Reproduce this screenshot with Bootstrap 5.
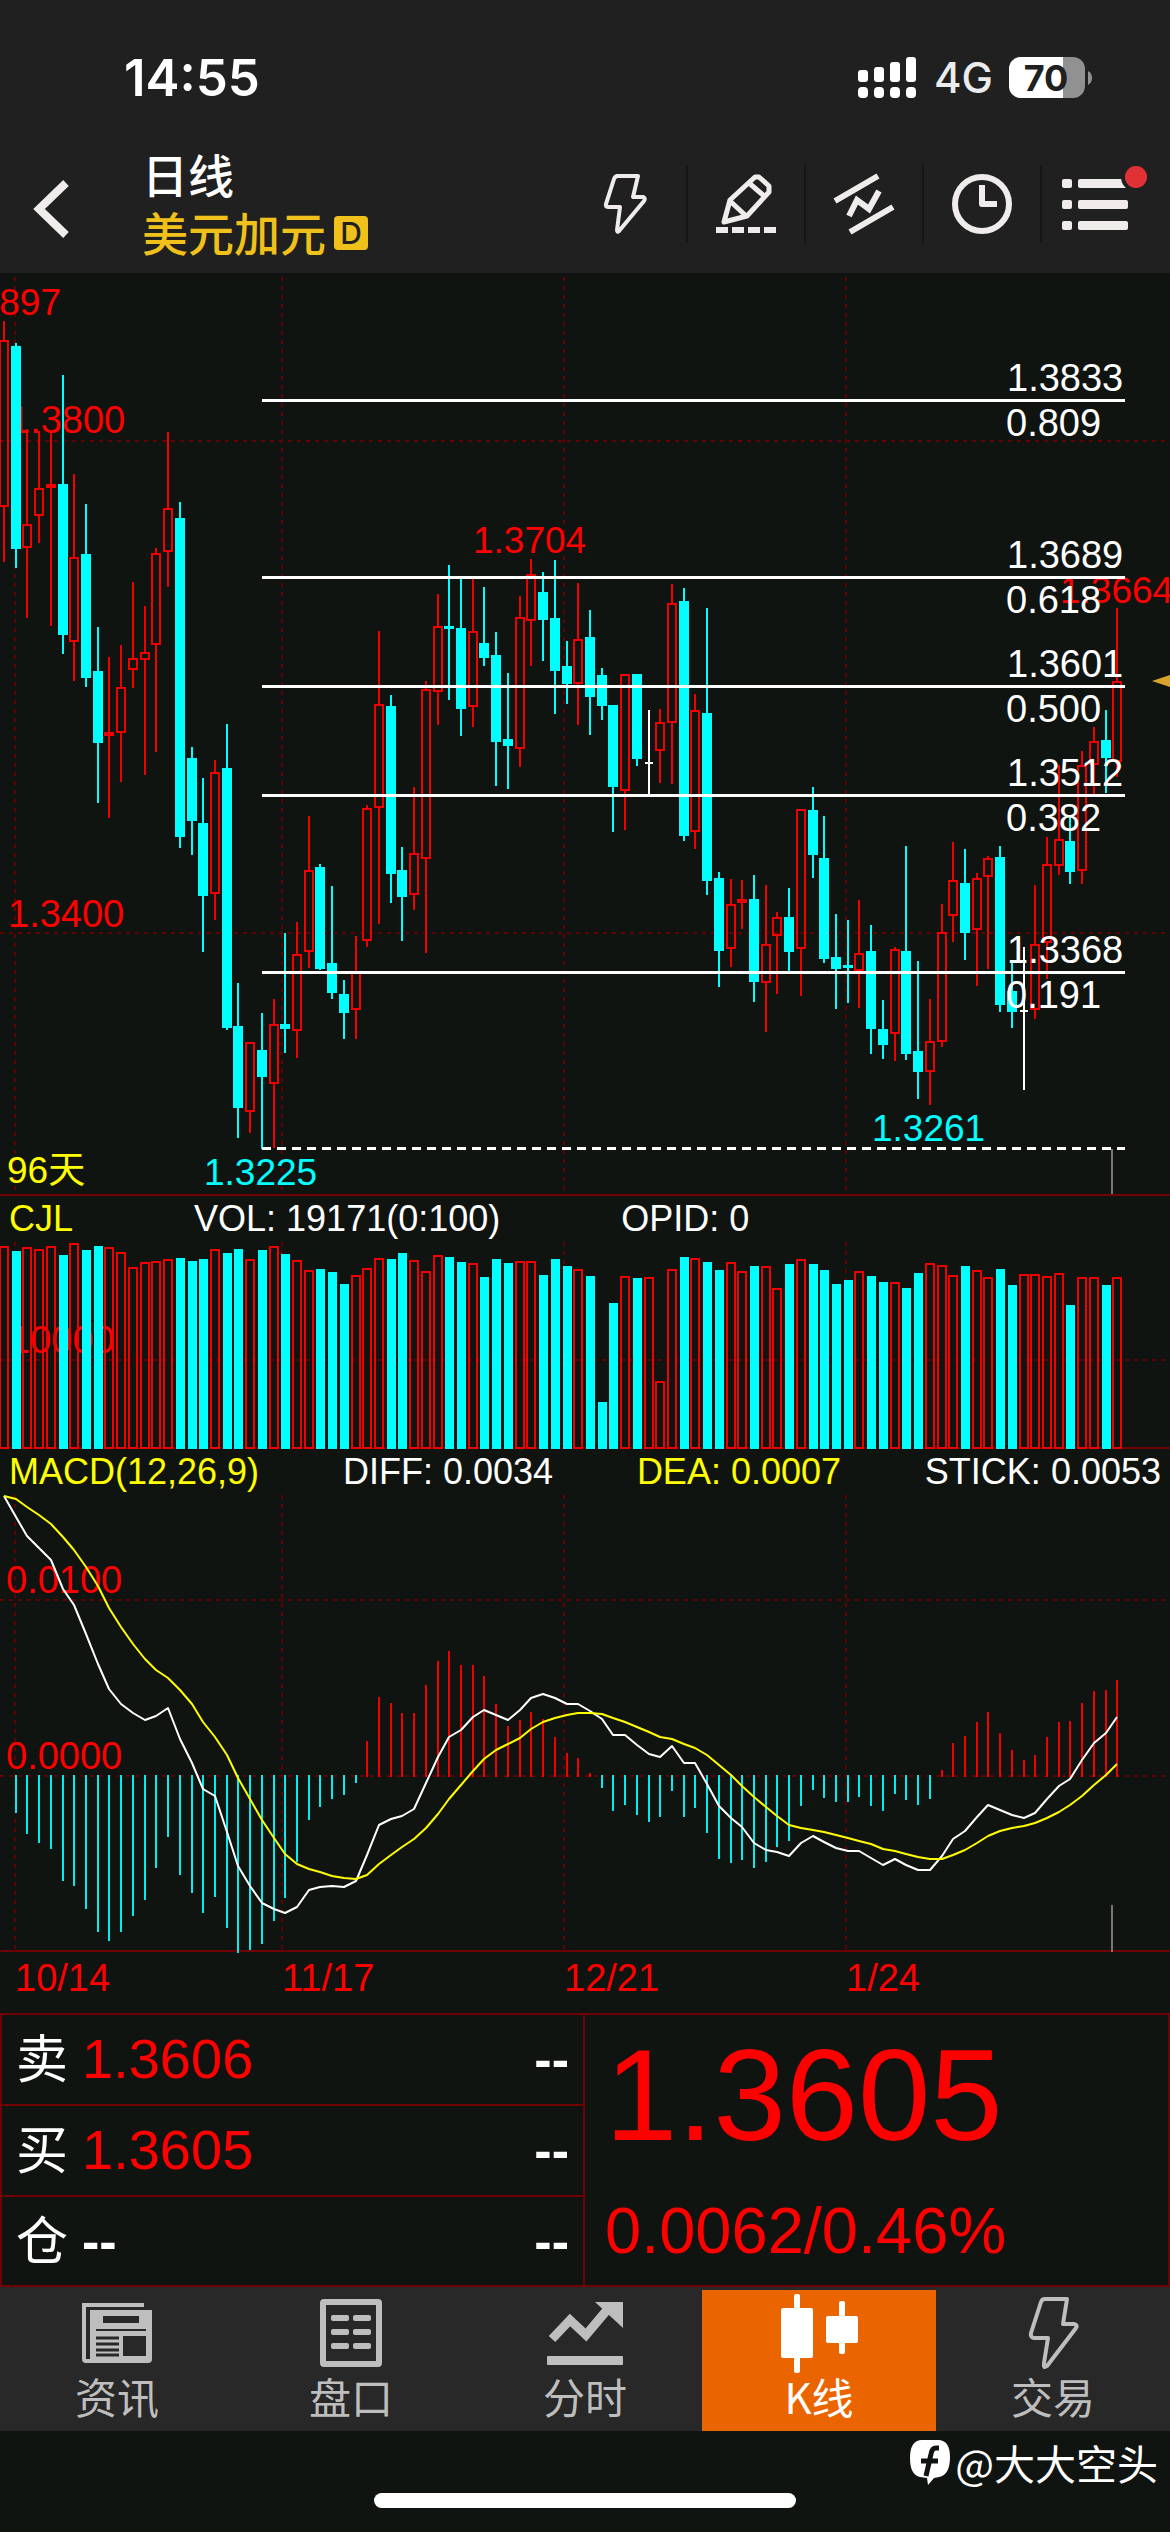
<!DOCTYPE html>
<html lang="zh-CN">
<head>
<meta charset="utf-8">
<meta name="viewport" content="width=device-width, initial-scale=1">
<title>美元加元 日线</title>
<link href="https://cdn.jsdelivr.net/npm/bootstrap@5.3.0/dist/css/bootstrap.min.css" rel="stylesheet">
<style>
  :root { --ink: #101411; --bar: #202020; --line: #6e0006; --up: #f00; --down: #0ff; --gold: #efc11a; }
  body { background: var(--ink); color: #fff; font-family: "Liberation Sans", "Noto Sans CJK SC", sans-serif; overflow-x: hidden; }
  svg { display: block; }
  .topbar { background: var(--bar); }
  .status-row { height: 116px; padding: 40px 77px 0 124px; font-family: Inter, sans-serif; }
  .clock-text { font-size: 51px; line-height: 76px; font-weight: 600; }
  .net-text { font-size: 42px; line-height: 76px; font-weight: 500; color: #ececec; }
  .title-row { height: 157px; }
  .title-main, .title-sub { font-family: "Noto Sans CJK SC", sans-serif; font-weight: 500; font-size: 46px; line-height: 58px; }
  .title-box { padding-top: 28px; }
  .title-sub { color: var(--gold); }
  .day-badge { width: 34px; height: 34px; margin-top: 4px; border-radius: 4px; background: var(--gold); color: #202020; font: 500 30px/34px Inter, sans-serif; text-align: center; }
  .btn.bare { padding: 0; border: 0; color: #efeceb; }
  .btn.back-btn { width: 142px; padding: 28px 0 0 32px; }
  .tools { padding-top: 18px; }
  .btn.tool-btn { width: 118px; height: 78px; border-radius: 0; border-right: 2px solid #161616; }
  .btn.tool-btn:last-child { border-right: 0; width: 128px; }
  .tool-btn svg { overflow: visible; }
  .panel-line { border-bottom: 2px solid var(--line); }
  .indicator-row { font-size: 36px; line-height: 46px; padding: 0 9px 0 9px; white-space: nowrap; }
  .indicator-vol { gap: 121px; }
  .c-yellow { color: #ff0; }
  .chart { width: 100%; height: auto; }
  .chart text { font-family: "Liberation Sans", "Noto Sans CJK SC", sans-serif; font-size: 37px; }
  .chart .axis { font-size: 38px; fill: var(--up); }
  .chart .fib { font-size: 38px; fill: #fff; }
  .quotes { border: 2px solid var(--line); }
  .quote-left { border-right: 2px solid var(--line); }
  .quote-row { height: 91px; padding: 0 14px 0 14px; border-bottom: 2px solid var(--line); }
  .quote-row:last-child { border-bottom: 0; height: 88px; }
  .side { font: 400 52px/82px "Noto Sans CJK SC", sans-serif; width: 66px; }
  .quote-val { font-size: 56px; line-height: 88px; color: var(--up); }
  .dashes { font-size: 52px; line-height: 88px; font-weight: 700; }
  .price-cell { padding: 8px 20px 0 20px; color: var(--up); }
  .price-big { font-size: 130px; line-height: 144px; }
  .price-chg { font-size: 65px; line-height: 104px; padding-top: 12px; }
  .tabs { background: #282828; height: 144px; }
  .tab-link { color: #bebebe; text-decoration: none; margin-top: 3px; padding-top: 3px; font: 400 42px/46px "Noto Sans CJK SC", sans-serif; }
  .tab-link.active { background: #ea6500; color: #fff; }
  .foot { height: 101px; padding-top: 6px; }
  .credit { font: 400 41px/50px "Noto Sans CJK SC", sans-serif; gap: 5px; padding-right: 12px; }
  .home-bar { width: 36%; height: 15px; margin-top: 6px; border-radius: 8px; background: #fff; }
</style>
<script src="https://cdn.jsdelivr.net/npm/bootstrap@5.3.0/dist/js/bootstrap.bundle.min.js"></script>
</head>
<body>
<header class="topbar">
  <div class="status-row d-flex justify-content-between align-items-start">
    <span class="clock-text">14:55</span>
    <div class="d-flex align-items-center">
      <svg width="60" height="42" viewBox="0 0 60 42" fill="#fff" aria-hidden="true">
        <rect x="0" y="13" width="10" height="12" rx="3"/><rect x="16" y="10" width="10" height="15" rx="3"/><rect x="32" y="5" width="10" height="20" rx="3"/><rect x="48" y="0" width="10" height="25" rx="3"/>
        <rect x="0" y="30" width="10" height="11" rx="4"/><rect x="16" y="30" width="10" height="11" rx="4"/><rect x="32" y="30" width="10" height="11" rx="4"/><rect x="48" y="30" width="10" height="11" rx="4"/>
      </svg>
      <span class="net-text ms-3 me-3">4G</span>
      <svg width="84" height="42" viewBox="0 0 84 42" role="img" aria-label="70">
        <defs><clipPath id="charge"><rect width="54" height="42"/></clipPath></defs>
        <rect width="76" height="41" rx="12" fill="#919191"/>
        <rect width="76" height="41" rx="12" fill="#fff" clip-path="url(#charge)"/>
        <path d="M79 14q4 2 4 7t-4 7z" fill="#919191"/>
        <text x="37" y="34" text-anchor="middle" font-family="Inter, sans-serif" font-weight="700" font-size="36" fill="#202020">70</text>
      </svg>
    </div>
  </div>
  <div class="title-row d-flex">
    <button class="btn bare back-btn text-start" type="button" aria-label="返回">
      <svg width="40" height="60" viewBox="0 0 40 60" fill="none" stroke="#efeceb" stroke-width="8"><path d="M34 4 7 30 34 56"/></svg>
    </button>
    <div class="title-box flex-grow-1">
      <div class="title-main">日线</div>
      <div class="title-sub d-flex align-items-center gap-2"><span>美元加元</span><span class="day-badge">D</span></div>
    </div>
    <div class="tools d-flex align-items-center">
      <button class="btn bare tool-btn" type="button" aria-label="闪电下单"><svg class="mx-auto" width="54" height="66" viewBox="0 0 54 66" fill="none" stroke="currentColor" stroke-width="4" stroke-linejoin="round"><path d="M15 5H37L32 26H42Q45 27 43 30L18 60Q16 62 16 59L19 36H7Q4 36 5 33L13 8Q14 5 17 5"/></svg></button>
      <button class="btn bare tool-btn" type="button" aria-label="画线"><svg class="mx-auto" width="60" height="62" viewBox="0 0 60 62" fill="none" stroke="currentColor" stroke-width="5" stroke-linejoin="round"><path d="M39 4H43L53 13V19L31 43 8 49 14 27ZM33 10 47 22M14 28 29 42"/><path d="M0 57H60" stroke-width="6" stroke-dasharray="12 4"/></svg></button>
      <button class="btn bare tool-btn" type="button" aria-label="趋势"><svg class="mx-auto" width="60" height="62" viewBox="0 0 60 62" fill="none" stroke="currentColor" stroke-width="6"><path d="M1 28 44 3M16 59 59 34M15 43 23 27 35 36 45 18"/></svg></button>
      <button class="btn bare tool-btn" type="button" aria-label="周期"><svg class="mx-auto" width="62" height="62" viewBox="0 0 62 62" fill="none" stroke="currentColor" stroke-width="6"><circle cx="31" cy="31" r="27"/><path d="M31 12V31H46" stroke-linejoin="round"/></svg></button>
      <button class="btn bare tool-btn" type="button" aria-label="菜单"><svg width="112" height="74" viewBox="0 0 112 74" fill="#efeceb"><g transform="translate(20 10)"><rect y="2" width="10" height="9" rx="2"/><rect x="16" y="2" width="50" height="9" rx="2"/><rect y="23" width="10" height="9" rx="2"/><rect x="16" y="23" width="50" height="9" rx="2"/><rect y="44" width="10" height="9" rx="2"/><rect x="16" y="44" width="50" height="9" rx="2"/></g><circle cx="94" cy="10" r="15" fill="#202020"/><circle cx="94" cy="10" r="11" fill="#e03236"/></svg></button>
    </div>
  </div>
</header>

<main>
  <section class="panel-line"><svg id="kline" class="chart" viewBox="0 273 1170 921" role="img" aria-label="K线图"></svg></section>
  <section>
    <div class="indicator-row indicator-vol d-flex"><span class="c-yellow">CJL</span><span>VOL: 19171(0:100)</span><span>OPID: 0</span></div>
    <svg id="volume" class="chart" viewBox="0 1242 1170 207" role="img" aria-label="成交量"></svg>
  </section>
  <section>
    <div class="indicator-row d-flex justify-content-between"><span class="c-yellow">MACD(12,26,9)</span><span>DIFF: 0.0034</span><span class="c-yellow">DEA: 0.0007</span><span>STICK: 0.0053</span></div>
    <svg id="macd" class="chart" viewBox="0 1495 1170 518" role="img" aria-label="MACD"></svg>
  </section>

  <section class="quotes d-flex">
    <div class="quote-left w-50">
      <div class="quote-row d-flex"><span class="side">卖</span><span class="quote-val flex-grow-1">1.3606</span><span class="dashes">--</span></div>
      <div class="quote-row d-flex"><span class="side">买</span><span class="quote-val flex-grow-1">1.3605</span><span class="dashes">--</span></div>
      <div class="quote-row d-flex"><span class="side">仓</span><span class="dashes flex-grow-1">--</span><span class="dashes">--</span></div>
    </div>
    <div class="price-cell w-50">
      <div class="price-big">1.3605</div>
      <div class="price-chg">0.0062/0.46%</div>
    </div>
  </section>
</main>

<nav class="tabs d-flex">
  <a href="#" class="tab-link flex-fill w-100 d-flex flex-column align-items-center">
    <svg width="80" height="80" viewBox="0 0 80 80" fill="#bebebe"><path d="M5 10H67V14H9V66H5Z"/><path fill-rule="evenodd" d="M13 17H75V66Q75 70 71 70H9Q5 70 5 66H13ZM26 23V30H62V23ZM19 36V38H69V36ZM46 43V63H69V43Z"/><path d="M19 45H42M19 51H42M19 57H42M19 62H42" stroke="#282828" stroke-width="3"/></svg>
    <span>资讯</span></a>
  <a href="#" class="tab-link flex-fill w-100 d-flex flex-column align-items-center">
    <svg width="80" height="80" viewBox="0 0 80 80" fill="#bebebe"><rect x="12" y="9" width="56" height="62" rx="1" fill="none" stroke="#bebebe" stroke-width="6"/><rect x="20" y="22" width="18" height="6" rx="2"/><rect x="42" y="22" width="18" height="6" rx="2"/><rect x="20" y="36" width="18" height="6" rx="2"/><rect x="42" y="36" width="18" height="6" rx="2"/><rect x="20" y="50" width="18" height="6" rx="2"/><rect x="42" y="50" width="18" height="6" rx="2"/></svg>
    <span>盘口</span></a>
  <a href="#" class="tab-link flex-fill w-100 d-flex flex-column align-items-center">
    <svg width="80" height="80" viewBox="0 0 80 80" fill="#bebebe"><path d="M7 46 25 27 41 42 62 17" fill="none" stroke="#bebebe" stroke-width="9"/><path d="M50 9H78V35Z"/><rect x="2" y="63" width="76" height="9" rx="1"/></svg>
    <span>分时</span></a>
  <a href="#" class="tab-link active flex-fill w-100 d-flex flex-column align-items-center" aria-current="page">
    <svg width="80" height="80" viewBox="0 0 80 80" fill="#fff"><rect x="2" y="15" width="32" height="50" rx="2"/><rect x="15" y="1" width="6" height="79" rx="2"/><rect x="47" y="23" width="32" height="27" rx="2"/><rect x="60" y="8" width="6" height="53" rx="2"/></svg>
    <span>K线</span></a>
  <a href="#" class="tab-link flex-fill w-100 d-flex flex-column align-items-center">
    <svg width="80" height="80" viewBox="0 0 80 80" fill="none" stroke="#bebebe" stroke-width="4" stroke-linejoin="round"><path d="M32 6H54L50 31H61Q65 32 63 35L34 73Q30 76 31 70L35 45H21Q17 44 18 40L28 9Q29 6 32 6Z"/></svg>
    <span>交易</span></a>
</nav>

<footer class="foot">
  <div class="credit d-flex justify-content-end align-items-center">
    <svg width="40" height="46" viewBox="0 0 40 46"><path d="M11 1H29Q40 2 40 18 40 36 29 38L24 39 18 46 17 39 10 38Q0 36 0 19 0 2 11 1Z" fill="#fff"/><path d="M29 9H26Q22 9 21 15L16 37M11 22H28" fill="none" stroke="#101411" stroke-width="5"/></svg>
    <span>@大大空头</span>
  </div>
  <div class="home-bar mx-auto"></div>
</footer>

<script>
  // Daily candles: kind (r rise, c fall, w flat), high, body top, body bottom, low, volume top
  const days = `r321,340,507,562,1246 c343,346,549,568,1251 r429,524,548,618,1247 r431,488,516,543,1249 r433,484,488,626,1246 c375,484,635,654,1255
r474,557,642,681,1243 c504,554,678,687,1250 c627,671,743,803,1246 r657,732,736,818,1247 r645,687,733,782,1252 r582,658,670,688,1267
r606,652,660,775,1262 r548,553,645,752,1261 r432,508,552,587,1259 c502,518,837,848,1258 c747,758,821,855,1261 c778,823,896,952,1259
r760,772,894,920,1249 c724,768,1028,1030,1253 c983,1026,1108,1138,1249 r1042,1042,1112,1133,1259 c1013,1050,1077,1149,1250 r999,1024,1084,1148,1246
c933,1024,1029,1053,1254 r922,954,1031,1058,1260 r816,870,952,968,1270 c864,867,969,970,1269 c886,963,993,999,1272 c980,994,1013,1039,1284
r936,972,1010,1039,1275 r805,808,941,947,1268 r631,704,808,924,1258 c695,706,874,903,1259 c847,870,897,941,1253 r787,853,895,910,1260
r681,689,859,953,1271 r594,626,692,725,1255 c565,626,629,700,1257 c578,628,709,736,1262 r577,631,707,727,1263 c587,643,658,666,1277
c632,655,742,786,1259 c673,739,746,789,1263 r596,617,749,767,1261 r559,574,621,666,1261 c572,592,620,661,1275 c560,618,671,714,1259
c641,666,684,704,1266 r583,639,684,725,1269 c610,637,697,735,1276 c668,675,706,720,1402 c705,705,787,832,1303 r674,674,791,830,1276
c674,674,759,766,1278 w710,763,763,794,1277 r709,722,751,783,1381 r584,603,723,784,1269 c588,601,836,841,1257 r694,710,832,849,1258
c608,713,881,895,1262 c872,878,951,987,1270 r879,904,949,967,1262 r880,899,903,929,1271 c875,899,982,1002,1266 r885,944,983,1032,1266
r912,917,936,994,1288 c888,917,952,971,1264 r809,809,949,996,1259 c787,810,855,878,1264 c816,858,959,963,1270 c914,957,969,1009,1284
c920,965,968,1003,1280 r900,953,971,1008,1271 c925,951,1029,1054,1276 c1000,1029,1045,1059,1282 r947,949,1034,1061,1282 c846,951,1054,1060,1288
c961,1051,1072,1099,1273 r999,1041,1072,1105,1263 r904,932,1042,1047,1265 r842,880,916,942,1275 c849,883,933,960,1266 r873,878,930,986,1270
r856,858,877,969,1277 c846,857,1005,1012,1269 c960,991,1012,1028,1285 w947,1011,1011,1090,1274 r885,944,1010,1019,1274 r837,864,943,979,1276
r765,839,866,875,1273 c817,841,872,884,1305 r751,765,871,884,1277 r727,741,765,794,1277 c710,740,758,793,1285 r608,681,762,777,1277`
    .trim().split(/\s+/).map(s => [s[0], ...s.slice(1).split(',').map(Number)]);
  const stick = [1776,1813,1834,1843,1849,1881,1886,1909,1932,1941,1932,1916,1900,1868,1837,1875,1893,1913,1897,1928,1953,1950,1944,1921,1898,1862,1820,1807,1799,1795,1783,1741,1697,1703,1713,1713,1685,1661,1651,1665,1665,1676,1704,1726,1720,1712,1719,1737,1753,1758,1773,1788,1811,1805,1815,1822,1817,1791,1817,1808,1833,1859,1863,1860,1868,1862,1847,1841,1806,1790,1798,1802,1802,1797,1806,1811,1794,1800,1805,1799,1770,1743,1736,1722,1712,1733,1750,1760,1755,1737,1722,1721,1703,1691,1690,1680];
  const diff = [1496,1517,1536,1548,1560,1589,1605,1634,1664,1689,1704,1713,1720,1716,1708,1739,1763,1789,1796,1832,1866,1886,1903,1909,1913,1907,1890,1887,1886,1887,1881,1855,1825,1819,1816,1809,1783,1757,1737,1730,1717,1710,1715,1720,1710,1698,1694,1698,1704,1704,1711,1719,1735,1735,1745,1754,1757,1746,1763,1763,1784,1806,1818,1827,1843,1850,1852,1856,1843,1836,1842,1848,1851,1851,1858,1865,1859,1865,1870,1870,1856,1839,1831,1817,1805,1810,1815,1818,1813,1799,1786,1779,1760,1743,1733,1717];
  const dea = [1496,1499,1507,1515,1524,1537,1550,1567,1586,1608,1627,1644,1659,1670,1678,1690,1704,1722,1737,1755,1778,1799,1820,1838,1854,1864,1869,1872,1876,1878,1879,1875,1864,1855,1847,1839,1828,1814,1799,1785,1771,1759,1750,1744,1738,1729,1722,1718,1715,1713,1713,1714,1718,1722,1727,1732,1737,1739,1744,1748,1755,1765,1775,1786,1797,1807,1816,1825,1828,1830,1832,1835,1838,1841,1844,1849,1851,1854,1857,1859,1859,1855,1850,1843,1836,1831,1828,1826,1823,1818,1812,1805,1796,1785,1775,1764];

  const RED = '#f00000', CYAN = '#00ffff';
  const x = i => Math.round(4 + i * 1113.3 / 95);
  const rect = (l, t, w, h, a) => `<rect x="${l}" y="${t}" width="${w}" height="${h}" ${a}/>`;
  const line = (a, b, c, d, col, w, extra = '') => `<path d="M${a} ${b}L${c} ${d}" fill="none" stroke="${col}" stroke-width="${w}" ${extra}/>`;
  const text = (a, b, s, attrs) => `<text x="${a}" y="${b}" ${attrs}>${s}</text>`;
  const grid = (top, bottom, rows) =>
    [15, 282, 564, 846].map(v => line(v, top, v, bottom, '#620006', 2, 'stroke-dasharray="4 5"')).join('') +
    rows.map(r => line(0, r, 1170, r, '#620006', 2, 'stroke-dasharray="4 5"')).join('');
  const hollow = `fill="none" stroke="${RED}" stroke-width="2"`;

  let k = grid(277, 1194, [441, 933]);
  k += text(61, 315, '1.3897', 'fill="#f00" text-anchor="end"');
  k += text(9, 433, '1.3800', 'class="axis"') + text(8, 927, '1.3400', 'class="axis"');
  k += text(7, 1183, '96天', 'fill="#ff0"') + text(204, 1185, '1.3225', `fill="${CYAN}"`) + text(872, 1141, '1.3261', `fill="${CYAN}"`);
  k += text(473, 553, '1.3704', 'fill="#f00"') + text(1060, 603, '1.3664', 'fill="#f00"');
  days.forEach(([kind, h, t, b, l], i) => {
    const c = x(i);
    if (kind === 'r') k += line(c, h, c, t, RED, 2) + line(c, b, c, l, RED, 2) + rect(c - 4, t + 1, 8, Math.max(b - t - 2, 1), hollow);
    else if (kind === 'c') k += line(c, h, c, l, CYAN, 2) + rect(c - 5, t, 10, b - t, `fill="${CYAN}"`);
    else k += line(c, h, c, l, '#fff', 2) + line(c - 4, t, c + 4, t, '#fff', 2);
  });
  [[400, '1.3833', '0.809'], [577, '1.3689', '0.618'], [686, '1.3601', '0.500'], [795, '1.3512', '0.382'], [972, '1.3368', '0.191']].forEach(([y, p, r]) => {
    k += rect(262, y - 1, 863, 3, 'fill="#fff"') + text(1007, y - 9, p, 'class="fib"') + text(1006, y + 36, r, 'class="fib"');
  });
  k += line(262, 1148.5, 1125, 1148.5, '#fff', 3, 'stroke-dasharray="9 6"') + line(1112, 1149, 1112, 1194, '#777', 2);
  k += '<path d="M1152 681 1170 675V687Z" fill="#d9a32c"/>';
  document.getElementById('kline').innerHTML = k;

  let v = grid(1242, 1449, [1360]) + line(0, 1448, 1170, 1448, '#6e0006', 2) + text(9, 1353, '10000', 'class="axis"');
  days.forEach(([kind, , , , , top], i) => {
    const c = x(i);
    v += kind === 'c' ? rect(c - 4, top, 9, 1449 - top, `fill="${CYAN}"`) : rect(c - 4, top + 1, 8, 1447 - top, hollow);
  });
  document.getElementById('volume').innerHTML = v;

  let m = grid(1495, 1950, [1600, 1776]) + line(0, 1951, 1170, 1951, '#6e0006', 2);
  m += text(6, 1593, '0.0100', 'class="axis"') + text(6, 1769, '0.0000', 'class="axis"');
  stick.forEach((y, i) => {
    if (y === 1776) return;
    m += y < 1776 ? line(x(i), y, x(i), 1777, RED, 2) : line(x(i), 1775, x(i), y, '#0ee', 2);
  });
  const curve = (pts, col) => `<polyline points="${pts.map((y, i) => x(i) + ',' + y).join(' ')}" fill="none" stroke="${col}" stroke-width="2" stroke-linejoin="round"/>`;
  m += curve(diff, '#fff') + curve(dea, '#ff0') + line(1112, 1905, 1112, 1952, '#777', 2);
  [[15, '10/14'], [282, '11/17'], [564, '12/21'], [846, '1/24']].forEach(([a, s]) => { m += text(a, 1991, s, 'class="axis"'); });
  document.getElementById('macd').innerHTML = m;
</script>
</body>
</html>
